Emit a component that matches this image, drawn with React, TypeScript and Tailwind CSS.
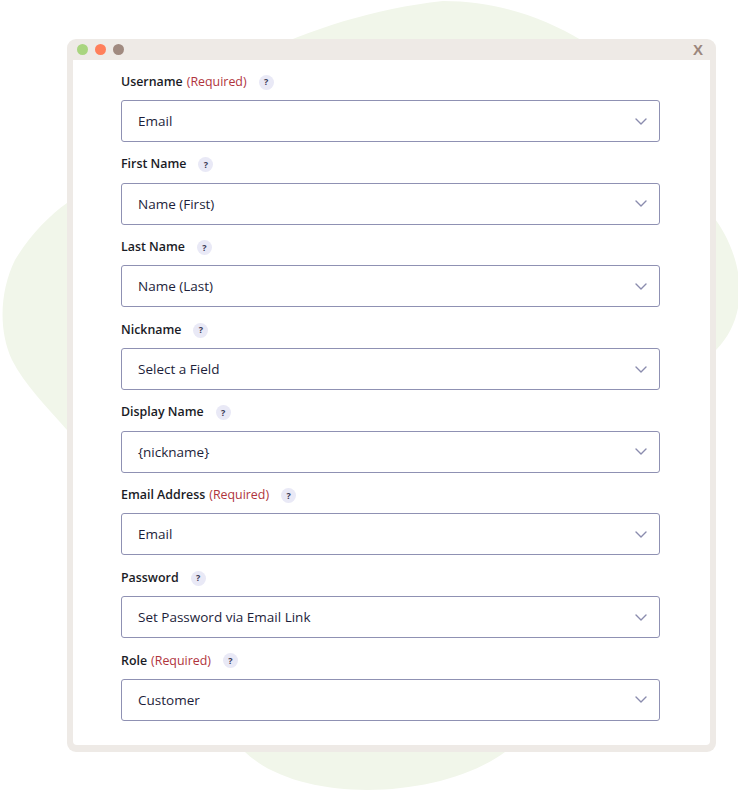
interface FieldType {
    label: string;
    required?: boolean;
    value: string;
}

const fields: FieldType[] = [
    { label: "Username", required: true, value: "Email" },
    { label: "First Name", value: "Name (First)" },
    { label: "Last Name", value: "Name (Last)" },
    { label: "Nickname", value: "Select a Field" },
    { label: "Display Name", value: "{nickname}" },
    { label: "Email Address", required: true, value: "Email" },
    { label: "Password", value: "Set Password via Email Link" },
    { label: "Role", required: true, value: "Customer" },
];

const Blob = () => (
    <svg className="absolute inset-0" width="738" height="792" viewBox="0 0 738 792">
        <path
            d="M 443 1 C 580 1 690 110 712 215 C 740 250 755 310 716 350 C 660 460 570 660 505 752 C 440 800 300 805 245 752 C 160 650 100 480 67 430 C 45 405 25 385 12 360 C -2 330 0 290 15 260 C 30 235 50 215 67 203 C 130 120 270 20 443 1 Z"
            fill="#f1f6ea"
        />
    </svg>
);

const Chevron = () => (
    <svg width="12" height="7" viewBox="0 0 12 7" fill="none">
        <polyline points="1,1 6,6 11,1" stroke="#8a8cae" strokeWidth="1.4" strokeLinecap="round" strokeLinejoin="round" />
    </svg>
);

const Field = ({ f }: { f: FieldType }) => (
    <div className="flex flex-col">
        <div className="flex items-center h-5 text-[#1a1b26]">
            <span className="font-semibold text-[12.4px]">{f.label}</span>
            {f.required && <span className="ml-1 text-[12.4px] text-[#b0343c]">(Required)</span>}
            <span className="ml-3 size-[15px] rounded-full bg-[#e9e9f6] flex items-center justify-center text-[9px] font-bold text-[#3a3a55]">?</span>
        </div>
        <div className="mt-2 h-[42px] border border-[#8f91b3] rounded-[3px] flex items-center justify-between pl-4 pr-3 text-[13.5px] text-[#1d1e3a]">
            <span>{f.value}</span>
            <Chevron />
        </div>
    </div>
);

export default function App() {
    return (
        <div className="relative w-[738px] h-[792px] overflow-hidden bg-white" style={{ fontFamily: '"Open Sans", "Noto Sans", sans-serif' }}>
            <Blob />
            <div className="relative ml-[67px] mt-[39px] w-[649px] h-[713px] bg-[#eeeae6] rounded-[9px] flex flex-col">
                <div className="h-[21px] flex items-center px-[10px] shrink-0">
                    <div className="flex gap-[7px]">
                        <span className="size-[11px] rounded-full bg-[#a9d57f]"></span>
                        <span className="size-[11px] rounded-full bg-[#ff7f5b]"></span>
                        <span className="size-[11px] rounded-full bg-[#a08a80]"></span>
                    </div>
                    <span className="ml-auto mr-[3px] text-[15px] font-bold leading-none text-[#9b877d]" style={{ fontFamily: '"Liberation Sans", sans-serif' }}>X</span>
                </div>
                <div className="mx-[6px] mb-[7px] grow bg-white rounded-b-[4px] pl-[48px] pr-[50px] pt-[12px] flex flex-col gap-[12.7px]">
                    {fields.map((f) => (
                        <Field key={f.label} f={f} />
                    ))}
                </div>
            </div>
        </div>
    )
}
